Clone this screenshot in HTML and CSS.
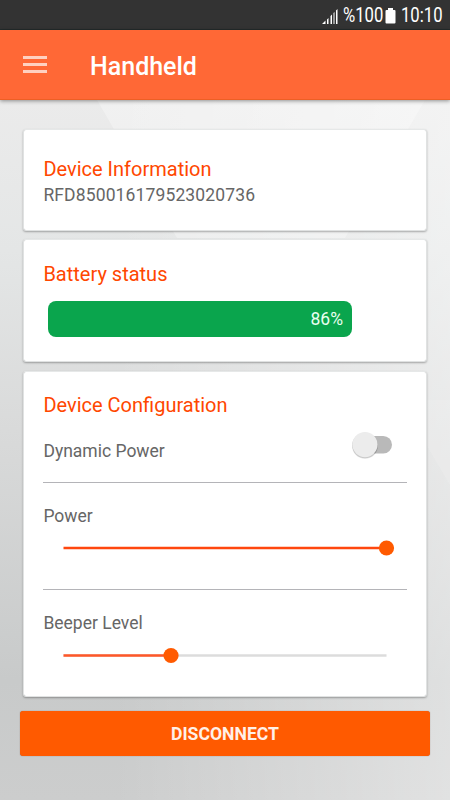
FILE: index.html
```html
<!DOCTYPE html>
<html lang="en">
<head>
<meta charset="utf-8">
<title>Handheld</title>
<link rel="stylesheet" href="styles.css">
</head>
<body>
<svg class="backdrop" viewBox="0 0 450 700" width="450" height="700" aria-hidden="true">
  <path d="M97 0H425L345 138H177Z" fill="#fff" opacity=".3"/>
  <path d="M400 300L450 385V300Z" fill="#fff" opacity=".12"/>
</svg>
<header class="statusbar">
  <svg class="signal" width="16" height="15" viewBox="0 0 16 15"><path d="M0 15L3.5 11.5V15ZM5 10.500L6.500 9V15H5ZM8.500 7L10 5.500V15H8.500ZM11.500 4L12.500 3V15H11.500ZM14 1.500L15.500 0V15H14Z" fill="#fff"/></svg>
  <span class="percent">%100</span>
  <svg class="battery" width="11" height="16" viewBox="0 0 11 16"><path d="M3 0H8V2H9.500Q10.500 2 10.500 3V14.500Q10.500 15.500 9.500 15.500H1.500Q.5 15.500 .5 14.500V3Q.5 2 1.500 2H3Z" fill="#fff"/></svg>
  <span class="clock">10:10</span>
</header>
<nav class="appbar">
  <div class="menu"><i></i><i></i><i></i></div>
  <h1>Handheld</h1>
</nav>
<main>
  <section class="card info">
    <h2>Device Information</h2>
    <p class="serial">RFD850016179523020736</p>
  </section>
  <section class="card status">
    <h2 class="battery-title">Battery status</h2>
    <div class="level"><span>86%</span></div>
  </section>
  <section class="card config">
    <h2>Device Configuration</h2>
    <div class="row">
      <p>Dynamic Power</p>
      <svg class="switch" width="44" height="32" viewBox="0 0 44 32"><rect x="8" y="7" width="35" height="17.500" rx="8.750" fill="#b9b9b9"/><circle cx="16" cy="16.800" r="13" fill="#000" opacity=".1"/><circle cx="16" cy="16.500" r="12.800" fill="#000" opacity=".12"/><circle cx="16" cy="15.600" r="12.600" fill="#ececec"/></svg>
    </div>
    <div class="group">
      <p>Power</p>
      <svg class="slider" width="340" height="40" viewBox="0 0 340 40"><path d="M8.500 20H331" stroke="#ff470f" stroke-width="2.500"/><circle cx="331.500" cy="20" r="7.600" fill="#ff5a00"/></svg>
    </div>
    <div class="group beeper">
      <p>Beeper Level</p>
      <svg class="slider" width="340" height="40" viewBox="0 0 340 40"><path d="M8.500 20.500H331.500" stroke="#dcdcdc" stroke-width="2.500"/><path d="M8.500 20.500H116" stroke="#ff5728" stroke-width="2.500"/><circle cx="116" cy="20.500" r="7.600" fill="#ff5a00"/></svg>
    </div>
  </section>
  <button class="disconnect" type="button">DISCONNECT</button>
</main>
</body>
</html>
```
FILE: styles.css
```css
* { box-sizing: border-box; }
body {
  margin: 0;
  width: 450px;
  height: 800px;
  overflow: hidden;
  position: relative;
  font-family: Roboto, sans-serif;
  color: #666;
  background:
    linear-gradient(90deg, rgba(255,255,255,0) 25%, rgba(255,255,255,.42) 100%),
    linear-gradient(180deg, #ebebeb 100px, #e4e6e6 250px, #d9dada 430px, #c8caca 680px, #cccdcd 800px);
}
.backdrop { position: absolute; left: 0; top: 100px; z-index: -1; }
h1, h2, p { margin: 0; font-weight: 400; white-space: nowrap; }
.statusbar {
  height: 30px;
  background: #333;
  border-bottom: 1px solid #242c2c;
  color: #fff;
  display: flex;
  justify-content: flex-end;
  align-items: center;
  padding: 3px 8px 0 0;
  font-size: 19.4px;
  line-height: 24px;
}
.signal { margin-right: 5px; }
.percent, .clock { transform: scaleX(.86); transform-origin: 0 50%; white-space: nowrap; }
.percent { width: 39px; }
.battery { margin: 0 5px 0 3px; }
.clock { width: 41px; }
.appbar {
  height: 70px;
  background: #ff6836;
  border-bottom: 1px solid #ed5f25;
  box-shadow: 0 1px 4px rgba(0,0,0,.42);
  display: flex;
  align-items: center;
  padding-left: 23px;
}
.menu { width: 24px; display: grid; gap: 4.5px; }
.menu i { height: 2.4px; background: #ffd0c0; }
h1 { margin: 4px 0 0 43px; color: #fff; font-size: 25px; line-height: 30px; font-weight: 500; }
main { padding: 29px 20px 0; }
.card {
  background: #fff;
  margin: 0 3px 9px;
  padding: 0 20px;
  border-radius: 3px;
  border: 1px solid #e0e2e2;
  border-top-color: #e6e8e8;
  background-clip: padding-box;
  box-shadow: 0 1px 2px rgba(0,0,0,.3);
}
h2 { color: #ff4700; font-size: 20px; line-height: 26px; }
.card h2, .card p { text-indent: -.6px; }
.card p { font-size: 17.5px; line-height: 24px; }
.card .serial { letter-spacing: .13px; padding-top: 1px; }
.info { height: 102px; padding-top: 26px; margin-bottom: 8px; }
.status { height: 123px; padding-top: 21px; }
.level {
  margin: 14px 0 0 4px;
  width: 304px;
  height: 36px;
  border-radius: 8px;
  background: #0aa54d;
  color: #e9fff0;
  display: flex;
  align-items: center;
  justify-content: flex-end;
  padding-right: 9px;
  font-size: 17.5px;
}
.config { height: 326px; padding: 20px 19px 0; }
.config h2, .config p { margin-left: 1px; }
.row { display: flex; justify-content: space-between; align-items: center; height: 64px; padding: 0 14px 10px 0; }
.row p { padding-top: 12px; }
.group { border-top: 1px solid #b4b4b8; padding-top: 21px; height: 107px; }
.slider { display: block; margin-left: 12px; }
.disconnect {
  display: block;
  width: 410px;
  height: 45px;
  margin-top: 14px;
  padding: 0;
  border: 0;
  border-radius: 3px;
  background: #ff5a00;
  box-shadow: 0 0 1px rgba(90,40,20,.65);
  color: #fff0e8;
  font: 700 17.6px/24px Roboto, sans-serif;
}
```
